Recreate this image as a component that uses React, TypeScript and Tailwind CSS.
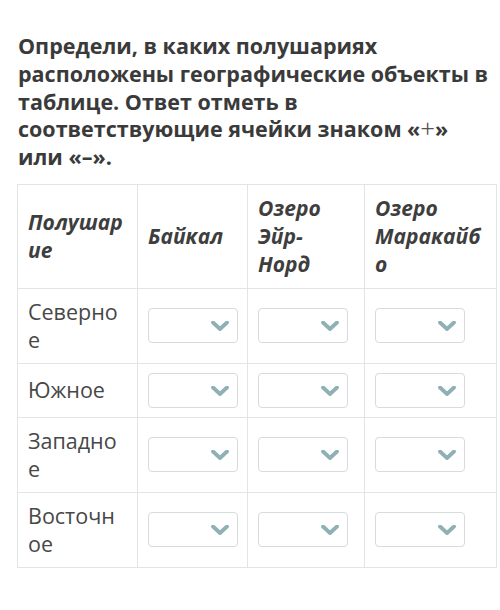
const cols = ["Байкал", "Озеро Эйр-Норд", "Озеро Маракайбо"];
const rows = ["Северное", "Южное", "Западное", "Восточное"];

function Select() {
  return (
    <div className="relative h-[35px] w-[90px] rounded-[4px] border border-[#d6dbdb] bg-white">
      <svg
        className="absolute right-[8px] top-[12px]"
        width="18"
        height="10"
        viewBox="0 0 18 10"
        fill="none"
      >
        <polyline
          points="2,1.5 9,8 16,1.5"
          stroke="#8fb0b4"
          strokeWidth="3.8"
          strokeLinecap="round"
          strokeLinejoin="round"
        />
      </svg>
    </div>
  );
}

export default function App() {
  return (
    <div
      className="h-[610px] w-[500px] bg-white pl-[18px] pr-[4px] pt-[32px]"
      style={{ fontFamily: '"Open Sans", "Noto Sans", sans-serif' }}
    >
      <h1 className="text-[21.5px] font-bold leading-[27.8px] text-[#3a3a3a]">
        Определи, в каких полушариях расположены географические объекты в
        таблице. Ответ отметь в соответствующие ячейки знаком «<span className="font-['Liberation_Serif',serif] text-[26px] font-normal leading-[0] text-[#555]">+</span>» или «–».
      </h1>

      <table className="mt-[13px] -ml-px w-[479px] table-fixed border-collapse text-[#474747]">
        <colgroup>
          <col className="w-[120px]" />
          <col className="w-[110px]" />
          <col className="w-[117px]" />
          <col className="w-[132px]" />
        </colgroup>
        <thead>
          <tr>
            <th className="h-[104px] border border-[#e1e5e5] px-[10px] py-[9px] text-left text-[21px] font-bold italic leading-[28px] text-[#3e3e3e] [overflow-wrap:anywhere]">
              Полушарие
            </th>
            {cols.map((c) => (
              <th
                key={c}
                className="border border-[#e1e5e5] px-[10px] py-[9px] text-left text-[21px] font-bold italic leading-[28px] text-[#3e3e3e] [overflow-wrap:anywhere]"
              >
                {c}
              </th>
            ))}
          </tr>
        </thead>
        <tbody>
          {rows.map((r) => (
            <tr key={r}>
              <td className="border border-[#e1e5e5] px-[10px] py-[9px] text-[21.5px] leading-[28px] [overflow-wrap:anywhere]">
                {r}
              </td>
              {cols.map((c) => (
                <td
                  key={c}
                  className="border border-[#e1e5e5] px-[10px] py-[9px] align-middle"
                >
                  <Select />
                </td>
              ))}
            </tr>
          ))}
        </tbody>
      </table>
    </div>
  );
}
